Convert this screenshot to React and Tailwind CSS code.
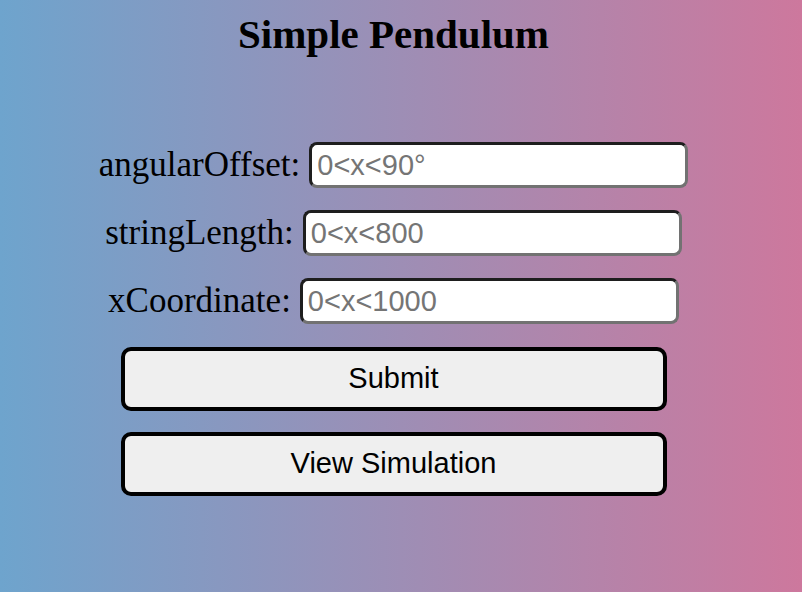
export default function App() {
  const rows = [
    { label: "angularOffset:", ph: "0<x<90°" },
    { label: "stringLength:", ph: "0<x<800" },
    { label: "xCoordinate:", ph: "0<x<1000" },
  ];
  return (
    <div className="w-full h-[592px] overflow-hidden bg-[linear-gradient(to_right,#6ea4cd,#cd789d)]">
      <div className="w-[787px] flex flex-col items-center">
        <h1 className="mt-[11px] text-[41px] leading-[46px] font-bold text-black font-['Liberation_Serif',serif]">
          Simple Pendulum
        </h1>
        <div className="mt-[85px] flex flex-col items-center gap-[22px]">
          {rows.map((r) => (
            <div key={r.label} className="flex items-center gap-[9px]">
              <label className="text-[35px] leading-[40px] text-black font-['Liberation_Serif',serif]">
                {r.label}
              </label>
              <input
                type="text"
                placeholder={r.ph}
                className="w-[379px] h-[46px] px-[5px] rounded-[8px] bg-white border-[3px] border-t-[#1e1e1e] border-l-[#1e1e1e] border-b-[#727272] border-r-[#727272] text-[29px] text-black placeholder:text-[#757575] font-['Liberation_Sans',Arial,sans-serif] outline-none"
              />
            </div>
          ))}
        </div>
        <div className="mt-[23px] flex flex-col items-center gap-[21px]">
          <button className="w-[546px] h-[64px] rounded-[10px] border-[4px] border-black bg-[#efefef] text-[29px] text-black font-['Liberation_Sans',Arial,sans-serif]">
            Submit
          </button>
          <button className="w-[546px] h-[64px] rounded-[10px] border-[4px] border-black bg-[#efefef] text-[29px] text-black font-['Liberation_Sans',Arial,sans-serif]">
            View Simulation
          </button>
        </div>
      </div>
    </div>
  );
}
